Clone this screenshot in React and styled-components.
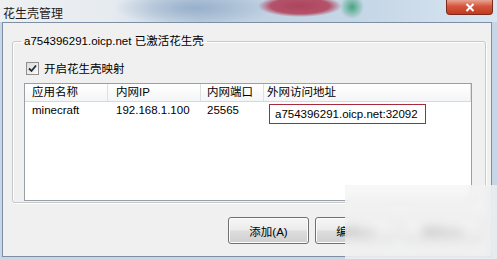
import styled, { createGlobalStyle } from "styled-components";

const GlobalStyle = createGlobalStyle`
  html, body {
    margin: 0;
    padding: 0;
    overflow: hidden;
  }
  body {
    font-family: "Liberation Sans", "Noto Sans CJK SC", sans-serif;
    font-size: 11.5px;
    color: #000;
  }
`;

const Frame = styled.div`
  position: relative;
  width: 497px;
  height: 259px;
  display: flex;
  flex-direction: column;
  background: #c6d6e6;
  overflow: hidden;
`;

const TitleBar = styled.div`
  flex: 0 0 22px;
  display: flex;
  align-items: flex-start;
  justify-content: space-between;
  background-color: #d3e0ec;
  background-image:
    radial-gradient(ellipse 42px 11px at 300px 6px, #ad445e 0%, #b45269 70%, rgba(190, 110, 130, 0) 100%),
    radial-gradient(ellipse 12px 12px at 352px 7px, #46a47d 0%, rgba(79, 168, 131, 0) 100%),
    radial-gradient(ellipse 80px 18px at 195px 8px, #98b0cb 0%, rgba(159, 182, 207, 0) 100%),
    linear-gradient(90deg, #eef0f2 0%, #e6ebf0 22%, #bfd0e1 40%, #c6d7e7 75%, #d9e6f1 100%);
`;

const Title = styled.span`
  font-size: 12px;
  margin: 4px 0 0 3px;
  color: #1a1a1a;
`;

const CloseButton = styled.div`
  width: 45px;
  height: 14px;
  margin-right: 4px;
  border: 1px solid #7a2b1c;
  border-top: none;
  border-radius: 0 0 4px 4px;
  background: linear-gradient(#e8a493 0%, #d5553c 45%, #c13a20 100%);
  display: flex;
  align-items: center;
  justify-content: center;
`;

const Body = styled.div`
  flex: 1;
  margin: 0 5px 2px 2px;
  border: 1px solid #7f8fa3;
  background: #f0f0f0;
  display: flex;
  flex-direction: column;
`;

const Group = styled.fieldset`
  margin: 11px 5px 0 9px;
  padding: 0 0 8px 0;
  border: 1px solid #c4c9cd;
  border-radius: 3px;
  box-shadow: inset 1px 1px 0 #fff, 1px 1px 0 #fff;
  height: 159px;
  box-sizing: content-box;
`;

const Legend = styled.legend`
  margin-left: 8px;
  padding: 0 3px;
  line-height: 14px;
`;

const CheckRow = styled.label`
  display: flex;
  align-items: center;
  gap: 5px;
  margin: 13px 0 0 13px;
  height: 14px;
`;

const CheckBox = styled.span`
  width: 11px;
  height: 11px;
  border: 1px solid #8f8f8f;
  background: linear-gradient(135deg, #dcdcdc, #fbfbfb);
  display: flex;
  align-items: center;
  justify-content: center;
`;

const List = styled.div`
  margin: 8px 13px 0 11px;
  height: 116px;
  border: 1px solid #9a9fa6;
  background: #fff;
`;

const Header = styled.div`
  display: grid;
  grid-template-columns: 83px 93px 63px 1fr;
  height: 17px;
  background: linear-gradient(#ffffff, #f4f5f6);
  border-bottom: 1px solid #d6d9dc;
`;

const HeadCell = styled.div`
  padding-left: ${(p) => p.$indent || 6}px;
  border-right: 1px solid #dcdfe3;
  line-height: 17px;
  white-space: nowrap;
`;

const Row = styled.div`
  display: grid;
  grid-template-columns: 83px 93px 63px 1fr;
  height: 16px;
`;

const Cell = styled.div`
  position: relative;
  padding-left: ${(p) => p.$indent || 6}px;
  line-height: 16px;
  white-space: nowrap;
`;

const Marked = styled.span`
  position: absolute;
  left: 5px;
  top: 2px;
  width: 150px;
  height: 18px;
  padding-left: 5px;
  border: 1px solid #a8283c;
  line-height: 18px;
  background: #fff;
`;

const ButtonRow = styled.div`
  display: flex;
  justify-content: flex-end;
  gap: 6px;
  margin: 14px 8px 0 0;
`;

const Button = styled.button`
  width: 81px;
  height: 27px;
  font: inherit;
  border: 1px solid #707070;
  border-radius: 3px;
  background: linear-gradient(#f6f6f6 0%, #ebebeb 48%, #dddddd 52%, #cfcfcf 100%);
  box-shadow: inset 0 0 0 1px #fcfcfc;
  color: #000;
  padding: 0;
`;

const Watermark = styled.div`
  position: absolute;
  left: 345px;
  top: 185px;
  width: 152px;
  height: 74px;
  background: rgba(244, 244, 244, 0.7);
  backdrop-filter: blur(5px);
`;

export default function App() {
  return (
    <>
      <GlobalStyle />
      <Frame>
        <TitleBar>
          <Title>花生壳管理</Title>
          <CloseButton>
            <svg width="10" height="9" viewBox="0 0 10 9">
              <path d="M1.5 1 L8.5 8 M8.5 1 L1.5 8" stroke="#fff" strokeWidth="2" />
            </svg>
          </CloseButton>
        </TitleBar>
        <Body>
          <Group>
            <Legend>a754396291.oicp.net 已激活花生壳</Legend>
            <CheckRow>
              <CheckBox>
                <svg width="9" height="9" viewBox="0 0 9 9">
                  <path d="M1 4.5 L3.5 7 L8 1.5" stroke="#1e2b3a" strokeWidth="1.8" fill="none" />
                </svg>
              </CheckBox>
              开启花生壳映射
            </CheckRow>
            <List>
              <Header>
                <HeadCell $indent={7}>应用名称</HeadCell>
                <HeadCell $indent={8}>内网IP</HeadCell>
                <HeadCell>内网端口</HeadCell>
                <HeadCell $indent={3}>外网访问地址</HeadCell>
              </Header>
              <Row>
                <Cell $indent={7}>minecraft</Cell>
                <Cell $indent={8}>192.168.1.100</Cell>
                <Cell>25565</Cell>
                <Cell>
                  <Marked>a754396291.oicp.net:32092</Marked>
                </Cell>
              </Row>
            </List>
          </Group>
          <ButtonRow>
            <Button>添加(A)</Button>
            <Button>编辑(E)</Button>
            <Button>删除(D)</Button>
          </ButtonRow>
        </Body>
        <Watermark />
      </Frame>
    </>
  );
}
